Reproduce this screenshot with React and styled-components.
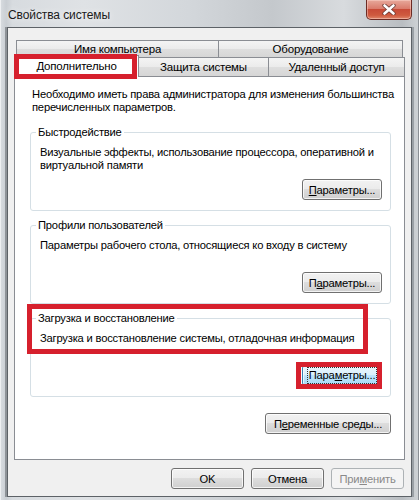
import React from "react";
import styled, { createGlobalStyle, css } from "styled-components";

const Global = createGlobalStyle`
  html, body { margin: 0; padding: 0; background: #cfd3d7; }
  body {
    font-family: "Liberation Sans", Arial, sans-serif;
    font-size: 11px;
    letter-spacing: -0.2px;
    color: #000;
  }
`;

const Window = styled.div`
  width: 419px;
  height: 500px;
  box-sizing: border-box;
  display: flex;
  flex-direction: column;
  padding: 0 7px 3px 7px;
  background: linear-gradient(90deg, #d9dde1 0%, #c9ced3 1.5%, #d7dbdf 3%, #dfe2e5 20%, #d3d7db 45%, #c4c8cc 65%, #d8dbde 82%, #b9bdc1 96%, #cfd3d6 100%);
  box-shadow: inset 1px 0 0 #eef0f2, inset -1px 0 0 #8b9095;
`;

const TitleBar = styled.div`
  height: 27px;
  flex: none;
  display: flex;
  align-items: flex-start;
  justify-content: space-between;
`;

const Title = styled.div`
  font-size: 12px;
  letter-spacing: -0.1px;
  color: #1b1b1b;
  margin: 8px 0 0 1px;
  text-shadow: 0 0 6px rgba(255, 255, 255, 0.9);
`;

const CloseButton = styled.div`
  width: 46px;
  height: 20px;
  box-sizing: border-box;
  border: 1px solid #6c2b24;
  border-top: none;
  border-radius: 0 0 5px 5px;
  background: linear-gradient(#e7a99b 0%, #da7c6c 45%, #c84b37 50%, #cf5a3f 80%, #e0866a 100%);
  box-shadow: inset 0 0 0 1px rgba(255, 220, 210, 0.45);
  display: flex;
  align-items: center;
  justify-content: center;
`;

const Client = styled.div`
  flex: 1;
  display: flex;
  flex-direction: column;
  background: #f0f0f0;
  border: 1px solid #5d6267;
  box-shadow: -2px 0 0 #8e9398, 2px 0 0 #9aa0a5;
  padding: 12px 6px 0 6px;
`;

const TabStrip = styled.div`
  display: flex;
  flex-direction: column;
`;

const TabRow = styled.div`
  display: flex;
  height: ${(p) => p.$h}px;
  padding-left: ${(p) => p.$indent}px;
  position: relative;
  z-index: ${(p) => p.$z};
`;

const Tab = styled.div`
  position: relative;
  width: ${(p) => p.$w}px;
  box-sizing: border-box;
  margin-left: -1px;
  &:first-child { margin-left: 0; }
  border: 1px solid #8a8d93;
  border-bottom: none;
  background: linear-gradient(#f4f4f4 0%, #ebebeb 50%, #dedede 51%, #d6d6d6 100%);
  display: flex;
  align-items: center;
  justify-content: center;
  font-size: 11.5px;
  padding-bottom: 1px;
  ${(p) =>
    p.$selected &&
    css`
      background: #fff;
      margin-top: -2px;
      height: calc(100% + 3px);
      z-index: 2;
      padding-bottom: 2px;
    `}
`;

const Mark = styled.span`
  position: absolute;
  box-sizing: border-box;
  border: 5px solid #d6202d;
  pointer-events: none;
  z-index: 5;
  top: ${(p) => p.$t}px;
  right: ${(p) => p.$r}px;
  bottom: ${(p) => p.$b}px;
  left: ${(p) => p.$l}px;
`;

const Panel = styled.div`
  height: 384px;
  box-sizing: border-box;
  background: #fff;
  border: 1px solid #8a8d93;
  padding: 11px 13px 0 15px;
  display: flex;
  flex-direction: column;
  position: relative;
  z-index: 1;
`;

const Intro = styled.p`
  margin: 0 -12px 0 2px;
  line-height: 13px;
  font-size: 11.2px;
`;

const GroupBox = styled.div`
  position: relative;
  height: 79px;
  box-sizing: border-box;
  margin-top: ${(p) => p.$mt}px;
  border: 1px solid #d5dfe5;
  border-radius: 3px;
  padding: 0 8px 10px 9px;
  display: flex;
  flex-direction: column;
  align-items: flex-start;
`;

const Legend = styled.span`
  display: inline-block;
  margin: -7px 0 0 -4px;
  padding: 0 2px;
  background: #fff;
  line-height: 13px;
  font-size: 11.2px;
`;

const Desc = styled.p`
  margin: 7px 0 0 0;
  line-height: 13px;
  font-size: 11.2px;
`;

const Button = styled.button`
  position: relative;
  font: inherit;
  letter-spacing: inherit;
  font-size: 11.2px;
  color: #000;
  width: ${(p) => p.$w}px;
  height: 21px;
  padding: 0;
  box-sizing: border-box;
  border: 1px solid #707070;
  border-radius: 3px;
  background: linear-gradient(#f2f2f2 0%, #ebebeb 49%, #dddddd 50%, #cfcfcf 100%);
  box-shadow: inset 0 0 0 1px rgba(255, 255, 255, 0.75);
  flex: none;
  ${(p) =>
    p.$bottom &&
    css`
      margin-top: auto;
      align-self: flex-end;
    `}
  ${(p) =>
    p.$focused &&
    css`
      border-color: #3c7fb1;
      background: linear-gradient(#eaf6fd 0%, #d9f0fc 49%, #bee6fd 50%, #a7d9f5 100%);
    `}
  &:disabled {
    color: #8a8a8a;
    border-color: #adb2b5;
    background: #f4f4f4;
    box-shadow: none;
  }
`;

const FocusRing = styled.span`
  display: inline-block;
  outline: 1px dotted #333;
  outline-offset: 1px;
  line-height: 13px;
`;

const Key = styled.span`
  text-decoration: underline;
  text-underline-offset: 1px;
`;

const EnvButton = styled(Button)`
  align-self: flex-end;
  margin-top: 16px;
`;

const DialogButtons = styled.div`
  display: flex;
  justify-content: flex-end;
  gap: 7px;
  margin-top: 8px;
  padding-right: 1px;
`;

function CloseGlyph() {
  return (
    <svg width="14" height="11" viewBox="0 0 14 11">
      <path
        d="M2.5 1.5 L11.5 9.5 M11.5 1.5 L2.5 9.5"
        stroke="#6a3a33"
        strokeWidth="4.2"
        strokeLinecap="round"
        fill="none"
      />
      <path
        d="M2.5 1.5 L11.5 9.5 M11.5 1.5 L2.5 9.5"
        stroke="#ffffff"
        strokeWidth="2.6"
        strokeLinecap="round"
        fill="none"
      />
    </svg>
  );
}

export default function App() {
  return (
    <>
      <Global />
      <Window>
        <TitleBar>
          <Title>Свойства системы</Title>
          <CloseButton>
            <CloseGlyph />
          </CloseButton>
        </TitleBar>
        <Client>
          <TabStrip>
            <TabRow $h={17} $indent={2} $z={0}>
              <Tab $w={203}>Имя компьютера</Tab>
              <Tab $w={185}>Оборудование</Tab>
            </TabRow>
            <TabRow $h={19} $indent={0} $z={2}>
              <Tab $w={125} $selected>
                Дополнительно
                <Mark $t={-2} $r={1} $b={-2} $l={-1} />
              </Tab>
              <Tab $w={131}>Защита системы</Tab>
              <Tab $w={137}>Удаленный доступ</Tab>
            </TabRow>
          </TabStrip>
          <Panel>
            <Intro>
              Необходимо иметь права администратора для изменения большинства
              перечисленных параметров.
            </Intro>
            <GroupBox $mt={18}>
              <Legend>Быстродействие</Legend>
              <Desc>
                Визуальные эффекты, использование процессора, оперативной и
                виртуальной памяти
              </Desc>
              <Button $w={80} $bottom>
                <Key>П</Key>араметры...
              </Button>
            </GroupBox>
            <GroupBox $mt={14}>
              <Legend>Профили пользователей</Legend>
              <Desc>Параметры рабочего стола, относящиеся ко входу в систему</Desc>
              <Button $w={80} $bottom>
                П<Key>а</Key>раметры...
              </Button>
            </GroupBox>
            <GroupBox $mt={14}>
              <Mark $t={-15} $r={22} $b={42} $l={-4} />
              <Legend>Загрузка и восстановление</Legend>
              <Desc>Загрузка и восстановление системы, отладочная информация</Desc>
              <Button $w={80} $bottom $focused>
                <FocusRing>
                  Пара<Key>м</Key>етры...
                </FocusRing>
                <Mark $t={-4} $r={-1} $b={-4} $l={-7} />
              </Button>
            </GroupBox>
            <EnvButton $w={126}>
              П<Key>е</Key>ременные среды...
            </EnvButton>
          </Panel>
          <DialogButtons>
            <Button $w={73}>OK</Button>
            <Button $w={73}>Отмена</Button>
            <Button $w={73} disabled>
              При<Key>м</Key>енить
            </Button>
          </DialogButtons>
        </Client>
      </Window>
    </>
  );
}
